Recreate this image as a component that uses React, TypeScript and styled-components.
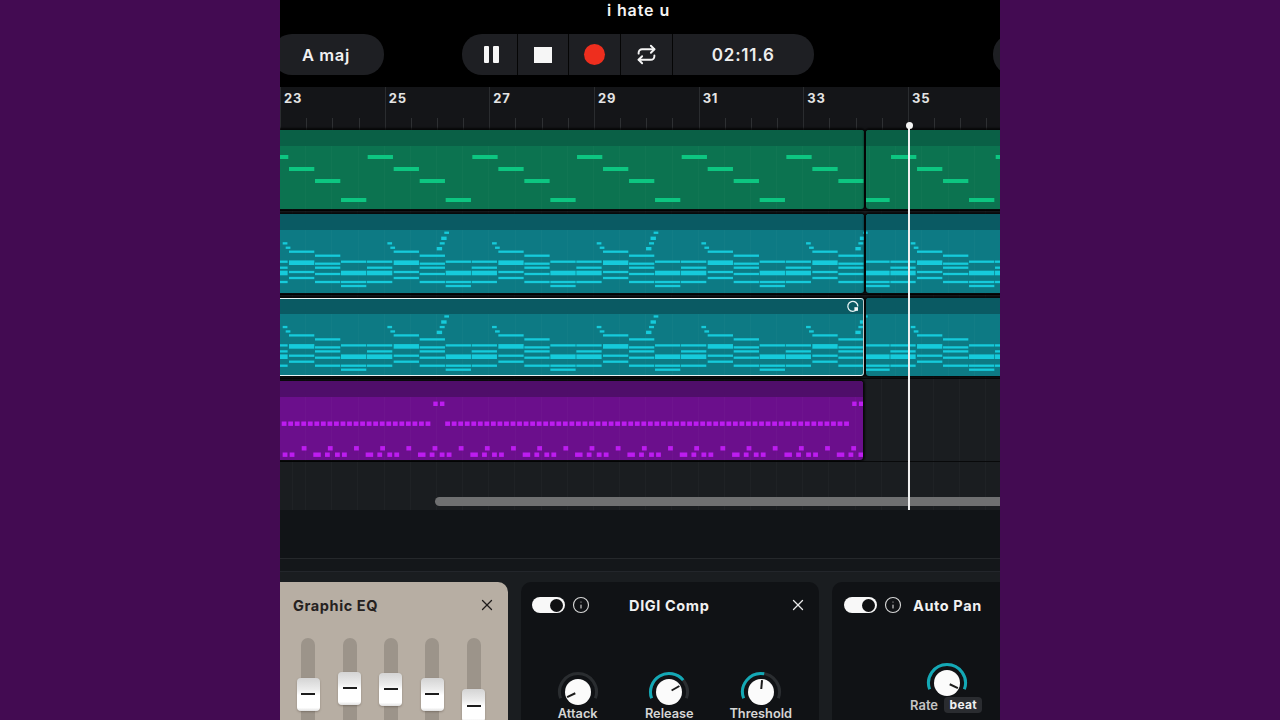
import React from 'react';
import styled, { createGlobalStyle } from 'styled-components';
import { Repeat, Info, X } from 'lucide-react';

const Global = createGlobalStyle`
  html, body { margin: 0; padding: 0; background: #430b52; height: 100%; }
  body { font-family: Inter, "Liberation Sans", sans-serif; overflow: hidden; }
`;

const Stage = styled.div`
  width: 720px; height: 720px; margin: 0 auto; background: #000; overflow: hidden;
  display: flex; flex-direction: column; position: relative;
`;
const Header = styled.header`
  height: 87px; flex: none; display: flex; flex-direction: column;
`;
const Title = styled.div`
  height: 34px; flex: none; padding: 0 3px 14px 0; box-sizing: border-box; display: flex; align-items: center; justify-content: center;
  color: #f4f4f4; font-size: 16px; font-weight: 600; letter-spacing: 0.9px;
`;
const Controls = styled.div`
  display: flex; height: 41px; flex: none;
`;
const KeyPill = styled.div`
  width: 112px; margin-left: -8px; background: #1e1f23; border-radius: 20px; flex: none; box-sizing: border-box;
  padding-left: 30px; display: flex; align-items: center; color: #f2f2f2; font-size: 16.5px; font-weight: 600; letter-spacing: 0.6px;
`;
const Transport = styled.div`
  margin-left: 78px; width: 352px; flex: none; display: flex; background: #1e1f23; border-radius: 20px; overflow: hidden;
`;
const TransportCell = styled.div<{ $w: number; $shift?: number }>`
  width: ${p => p.$w}px; flex: none; box-sizing: border-box; border-right: 1px solid #050505;
  padding-left: ${p => p.$shift ?? 0}px;
  display: flex; align-items: center; justify-content: center; color: #f4f4f4; gap: 4px;
  &:last-child { border-right: none; flex: 1; }
`;
const Time = styled.span`
  font-size: 17px; font-weight: 600; letter-spacing: 0.8px; color: #eee;
`;
const PauseBar = styled.i`
  width: 5.5px; height: 17px; background: #f6f6f6; border-radius: 1px; display: block;
`;
const StopSquare = styled.i`
  width: 18px; height: 16px; background: #f6f6f6; display: block;
`;
const RecDot = styled.i`
  width: 21px; height: 21px; border-radius: 50%; background: #ee2e1e; display: block;
`;
const SidePill = styled.div`
  margin-left: 179px; width: 100px; flex: none; background: #1e1f23; border-radius: 20px;
`;

const Timeline = styled.div`
  position: relative; flex: none; display: flex; flex-direction: column;
`;
const Ruler = styled.div`
  height: 43px; flex: none; background: #141518; display: flex;
`;
const Bar = styled.div`
  width: 104.67px; flex: none; box-sizing: border-box; border-left: 1px solid #2a2c2f;
  display: flex; flex-direction: column; justify-content: space-between;
`;
const BarLabel = styled.span`
  padding: 4px 0 0 3px; color: #e4e4e4; font-size: 13px; font-weight: 700; letter-spacing: 0.8px; line-height: 15px;
`;
const Ticks = styled.div`
  display: flex; height: 12px;
`;
const Tick = styled.i`
  flex: 1; display: block; border-right: 1px solid #2e3033;
  &:last-child { border-right: none; }
`;
const gridLines = `repeating-linear-gradient(90deg, rgba(255,255,255,0.022) 0 1px, transparent 1px 26.17px)`;
const TrackRow = styled.div<{ $h: number; $pad: number }>`
  height: ${p => p.$h}px; padding-top: ${p => p.$pad}px; box-sizing: border-box; flex: none;
  background-color: #1a1d20; border-bottom: 1px solid #08090a;
  background-image: ${gridLines};
  background-position-x: 25px;
  display: flex; gap: 2px;
`;
const Clip = styled.div<{ $w: number; $h: number; $fill: string; $selected?: boolean; $flushLeft?: boolean }>`
  width: ${p => p.$w}px; height: ${p => p.$h}px; flex: none; display: flex; flex-direction: column; overflow: hidden;
  background: ${p => p.$fill}; border-radius: 3px; margin-left: ${p => (p.$flushLeft ? '-4px' : '0')};
  box-shadow: 0 0 2px 2px rgba(0,0,0,0.7);
  outline: ${p => (p.$selected ? '1.5px solid #e4f4f4' : 'none')}; outline-offset: -1.5px;
`;
const ClipHead = styled.div<{ $fill: string }>`
  height: 16px; flex: none; background: ${p => p.$fill}; display: flex; justify-content: flex-end; align-items: center; padding-right: 4px; color: #e8f4f4;
`;
const ClipBody = styled.div`
  flex: 1; min-height: 0;
  background-image: repeating-linear-gradient(90deg, rgba(255,255,255,0.018) 0 1px, transparent 1px 26.17px);
  background-position-x: 3px;
`;
const EmptyRow = styled.div`
  height: 48px; flex: none; background-color: #1a1d20;
  background-image: ${gridLines};
  background-position-x: 25px;
`;
const Playhead = styled.div`
  position: absolute; left: 628px; top: 38px; width: 1.5px; height: 385px; background: #f0f0f0;
  &::before { content: ''; position: absolute; left: -2.5px; top: -3.5px; width: 7px; height: 7px; border-radius: 50%; background: #f4f4f4; }
`;
const Scrollbar = styled.div`
  position: absolute; left: 155px; right: -20px; top: 410px; height: 9px; border-radius: 4.5px; background: #6f7071;
`;

const Gutter = styled.div`
  height: 49px; box-sizing: border-box; flex: none; background: #111417; border-bottom: 1px solid #25282b;
`;
const Gutter2 = styled.div`
  height: 13px; box-sizing: border-box; flex: none; background: #14171a; border-bottom: 1px solid #23262b;
`;
const Rack = styled.div`
  flex: 1; min-height: 0; background: #1a1d20; padding-top: 10px; display: flex; gap: 13.5px; overflow: hidden;
`;
const EqCard = styled.section`
  width: 237.5px; margin-left: -10px; flex: none; background: #b7aea3; border-radius: 10px; box-sizing: border-box;
  padding: 15px 12px 0 23px; height: 200px;
`;
const EqHead = styled.div`
  display: flex; align-items: center; justify-content: space-between; height: 16px; color: #1f1c1b;
`;
const EqTitle = styled.span`
  font-size: 14.5px; font-weight: 700; letter-spacing: 0.6px; color: #25211f;
`;
const Sliders = styled.div`
  display: flex; gap: 27.33px; padding-left: 8.3px; margin-top: 25px;
`;
const SliderTrack = styled.div`
  width: 14px; height: 120px; border-radius: 7px; background: #9c948a; flex: none; display: flex; flex-direction: column; align-items: center;
`;
const Thumb = styled.div<{ $top: number }>`
  width: 23px; height: 33px; flex: none; margin-top: ${p => p.$top}px; border-radius: 4px;
  background: linear-gradient(180deg, #d4d4d4 0%, #ececec 35%, #ffffff 52%, #ffffff 90%, #e0e0e0 100%);
  box-shadow: 0 1px 2px rgba(60,50,40,0.35);
  display: flex; align-items: center; justify-content: center;
  &::before { content: ''; width: 14px; height: 2px; background: #1c1c1c; }
`;
const DarkCard = styled.section<{ $w: number }>`
  width: ${p => p.$w}px; flex: none; height: 200px; background: #101215; border-radius: 10px; box-sizing: border-box; padding-top: 15px;
`;
const CompHead = styled.div`
  display: grid; grid-template-columns: 1fr auto 1fr; grid-template-rows: 16px; align-items: center; height: 16px; padding: 0 12px 0 11px; color: #e9e9e9;
`;
const HeadLeft = styled.div`
  display: flex; align-items: center; gap: 7px; color: #d6d6d6;
`;
const CloseWrap = styled.div`
  justify-self: end; display: flex;
`;
const CardTitle = styled.span`
  color: #f1f1f1; font-size: 14.5px; font-weight: 700; letter-spacing: 0.6px;
`;
const Toggle = styled.div`
  width: 33px; height: 15.5px; border-radius: 8px; background: #f8f8f8; display: flex; align-items: center; justify-content: flex-end; padding-right: 2px; box-sizing: border-box;
  &::after { content: ''; width: 13px; height: 13px; border-radius: 50%; background: #0f1012; }
`;
const KnobRow = styled.div`
  display: grid; grid-template-columns: repeat(3, 91.5px); padding-left: 11px; margin-top: 57px;
`;
const KnobCell = styled.div`
  display: flex; flex-direction: column; align-items: center;
`;
const KnobLabel = styled.span`
  margin-top: -7px; color: #d6d6d6; font-size: 12.8px; font-weight: 600; line-height: 13px;
`;
const PanHead = styled.div`
  display: flex; align-items: center; height: 16px; padding-left: 12px; color: #d6d6d6; gap: 7px;
`;
const PanTitle = styled(CardTitle)`
  margin-left: 4px;
`;
const PanBody = styled.div`
  display: flex; flex-direction: column; align-items: flex-start; padding-left: 78px; margin-top: 48px;
`;
const PanKnobWrap = styled.div`
  margin-left: 14.5px; display: flex;
`;
const RateRow = styled.div`
  display: flex; align-items: center; gap: 6px; margin-top: -8px;
`;
const RateText = styled.span`
  color: #c4c4c4; font-size: 13px; font-weight: 600;
`;
const Chip = styled.span`
  background: #2a2c30; color: #f0f0f0; font-size: 12px; font-weight: 700; border-radius: 4px; padding: 0 5.5px; line-height: 16px; letter-spacing: 0.3px;
`;

const P = 104.67;
type R = { x: number; y: number; w: number; h: number };

const greenNotes: R[] = [];
for (let k = -1; k < 8; k++) {
  ([[263, 157], [289, 169], [315, 181], [341, 200]] as const).forEach(([x, y]) =>
    greenNotes.push({ x: x + k * P, y: y - 2, w: 25.3, h: 4 }));
}

const tealBeats: [number, [number, boolean][]][] = [
  [289, [[251.7, false], [262.7, true], [272, false], [278, false]]],
  [315, [[255.7, false], [263.7, false], [267.7, false], [274, false], [282, false]]],
  [341, [[261.7, false], [273, true], [282, false], [286, false]]],
  [367, [[261.7, false], [267.7, false], [273, true], [282, false]]],
];
const tealNotes = (dy: number): R[] => {
  const out: R[] = [];
  for (let k = -1; k < 8; k++) {
    tealBeats.forEach(([x, ys]) => ys.forEach(([y, thick]) => {
      const h = thick ? 4.6 : 2.3;
      out.push({ x: x + k * P, y: y - h / 2 + dy, w: 25.3, h });
    }));
    out.push({ x: 282.7 + (k + 1) * P, y: 242.2 + dy, w: 4.7, h: 2.3 });
    out.push({ x: 285.7 + (k + 1) * P, y: 246.6 + dy, w: 4.7, h: 2.3 });
  }
  for (let k = 0; k < 3; k++) {
    const o = k * 209.33;
    out.push({ x: 444.3 + o, y: 231.6 + dy, w: 4.7, h: 2.3 });
    out.push({ x: 441.2 + o, y: 236.6 + dy, w: 5.4, h: 3.4 });
    out.push({ x: 439.7 + o, y: 242.2 + dy, w: 5, h: 2.3 });
    out.push({ x: 436.7 + o, y: 247 + dy, w: 5.4, h: 3.4 });
  }
  return out;
};

const purpleNotes: R[] = [];
for (let k = -1; k < 2; k++) {
  purpleNotes.push({ x: 433.3 + k * 418.9, y: 401.6, w: 4.4, h: 4.4 }, { x: 440 + k * 418.9, y: 401.6, w: 4.4, h: 4.4 });
}
for (let i = 0; i < 90; i++) {
  const x = 281.7 + i * 6.54;
  if (x > 850 || (x > 431 && x < 445)) continue;
  purpleNotes.push({ x, y: 421.5, w: 4.8, h: 4.4 });
}
for (let i = 0; i < 22; i++) purpleNotes.push({ x: 301.7 + i * 26.17, y: 446.1, w: 4.8, h: 4.4 });
for (let k = -1; k < 11; k++) {
  [[0, 7.5], [11.7, 4.8], [21.7, 4.8], [28.7, 4.8]].forEach(([o, w]) =>
    purpleNotes.push({ x: 313.3 + k * 52.35 + o, y: 452.5, w, h: 4.4 }));
}

const Notes: React.FC<{ x0: number; y0: number; w: number; h: number; color: string; notes: R[] }> = ({ x0, y0, w, h, color, notes }) => (
  <svg width={w} height={h} viewBox={`${x0} ${y0} ${w} ${h}`} style={{ display: 'block' }}>
    {notes.map((n, i) => <rect key={i} x={n.x} y={n.y} width={n.w} height={n.h} fill={color} />)}
  </svg>
);

const polar = (r: number, a: number) => {
  const t = (a * Math.PI) / 180;
  return [22 + r * Math.sin(t), 22 - r * Math.cos(t)];
};
const arc = (r: number, a: number, b: number) => {
  const [x1, y1] = polar(r, a);
  const [x2, y2] = polar(r, b);
  return `M${x1} ${y1}A${r} ${r} 0 ${b - a > 180 ? 1 : 0} 1 ${x2} ${y2}`;
};
const Knob: React.FC<{ value: number; pointer: number }> = ({ value, pointer }) => {
  const [px1, py1] = polar(3, pointer);
  const [px2, py2] = polar(12, pointer);
  return (
    <svg width={44} height={44} viewBox="0 0 44 44" style={{ display: 'block' }}>
      <path d={arc(18.5, -110, 110)} fill="none" stroke="#2a2d30" strokeWidth={3} />
      {value > -110 && <path d={arc(18.5, -110, value)} fill="none" stroke="#13a9b6" strokeWidth={3} />}
      <circle cx={22} cy={22} r={13} fill="#fbfbfb" />
      <line x1={px1} y1={py1} x2={px2} y2={py2} stroke="#1d1d1d" strokeWidth={2} />
    </svg>
  );
};

const LoopMark = () => (
  <svg width={14} height={14} viewBox="0 0 14 14" style={{ display: 'block' }}>
    <path d="M10.9 10.2A5 5 0 1 1 11.8 7.5" fill="none" stroke="#e4f2f3" strokeWidth={1.3} />
    <rect x={8.4} y={8.2} width={3.6} height={3.6} fill="#f4fafa" />
  </svg>
);

const bars = [23, 25, 27, 29, 31, 33, 35];
const eqThumbs = [39.7, 33.7, 34.7, 39.7, 51];

const G = { fill: '#0c7350', head: '#0a6046', note: '#0dc681' };
const T = { fill: '#0d7a84', head: '#0a5a63', note: '#16cbdb' };
const V = { fill: '#6b0f8c', head: '#4f0e6a', note: '#bd1cf0' };

const ClipPair: React.FC<{ top: number; h: number; c: typeof G; notes: R[]; selected?: boolean }> = ({ top, h, c, notes, selected }) => (
  <>
    <Clip $w={588} $h={h} $fill={c.fill} $selected={selected} $flushLeft>
      <ClipHead $fill={c.head}>{selected && <LoopMark />}</ClipHead>
      <ClipBody><Notes x0={276} y0={top + 16} w={588} h={h - 16} color={c.note} notes={notes} /></ClipBody>
    </Clip>
    <Clip $w={160} $h={h} $fill={c.fill}>
      <ClipHead $fill={c.head} />
      <ClipBody><Notes x0={866} y0={top + 16} w={160} h={h - 16} color={c.note} notes={notes} /></ClipBody>
    </Clip>
  </>
);

export default function App() {
  return (
    <Stage>
      <Global />
      <Header>
        <Title>i hate u</Title>
        <Controls>
          <KeyPill>A maj</KeyPill>
          <Transport>
            <TransportCell $w={55.5} $shift={4}><PauseBar /><PauseBar /></TransportCell>
            <TransportCell $w={51.5}><StopSquare /></TransportCell>
            <TransportCell $w={51.5}><RecDot /></TransportCell>
            <TransportCell $w={52}><Repeat size={21} strokeWidth={2.2} /></TransportCell>
            <TransportCell $w={141.5}><Time>02:11.6</Time></TransportCell>
          </Transport>
          <SidePill />
        </Controls>
      </Header>
      <Timeline>
        <Ruler>
          {bars.map(b => (
            <Bar key={b}>
              <BarLabel>{b}</BarLabel>
              <Ticks><Tick /><Tick /><Tick /><Tick /></Ticks>
            </Bar>
          ))}
        </Ruler>
        <TrackRow $h={81} $pad={0}><ClipPair top={130} h={79} c={G} notes={greenNotes} /></TrackRow>
        <TrackRow $h={84} $pad={3}><ClipPair top={214} h={79} c={T} notes={tealNotes(0)} /></TrackRow>
        <TrackRow $h={84} $pad={3}><ClipPair top={298} h={78} c={T} notes={tealNotes(83.7)} selected /></TrackRow>
        <TrackRow $h={83} $pad={2}>
          <Clip $w={587} $h={79} $fill={V.fill} $flushLeft>
            <ClipHead $fill={V.head} />
            <ClipBody><Notes x0={276} y0={397} w={587} h={63} color={V.note} notes={purpleNotes} /></ClipBody>
          </Clip>
        </TrackRow>
        <EmptyRow />
        <Scrollbar />
        <Playhead />
      </Timeline>
      <Gutter />
      <Gutter2 />
      <Rack>
        <EqCard>
          <EqHead>
            <EqTitle>Graphic EQ</EqTitle>
            <X size={18} strokeWidth={1.7} />
          </EqHead>
          <Sliders>
            {eqThumbs.map((t, i) => <SliderTrack key={i}><Thumb $top={t} /></SliderTrack>)}
          </Sliders>
        </EqCard>
        <DarkCard $w={297.5}>
          <CompHead>
            <HeadLeft><Toggle /><Info size={18} strokeWidth={1.5} /></HeadLeft>
            <CardTitle>DIGI Comp</CardTitle>
            <CloseWrap><X size={18} strokeWidth={1.7} /></CloseWrap>
          </CompHead>
          <KnobRow>
            <KnobCell><Knob value={-110} pointer={-115} /><KnobLabel>Attack</KnobLabel></KnobCell>
            <KnobCell><Knob value={50} pointer={60} /><KnobLabel>Release</KnobLabel></KnobCell>
            <KnobCell><Knob value={10} pointer={5} /><KnobLabel>Threshold</KnobLabel></KnobCell>
          </KnobRow>
        </DarkCard>
        <DarkCard $w={300}>
          <PanHead>
            <Toggle /><Info size={18} strokeWidth={1.5} />
            <PanTitle>Auto Pan</PanTitle>
          </PanHead>
          <PanBody>
            <PanKnobWrap><Knob value={110} pointer={115} /></PanKnobWrap>
            <RateRow><RateText>Rate</RateText><Chip>beat</Chip></RateRow>
          </PanBody>
        </DarkCard>
      </Rack>
    </Stage>
  );
}
